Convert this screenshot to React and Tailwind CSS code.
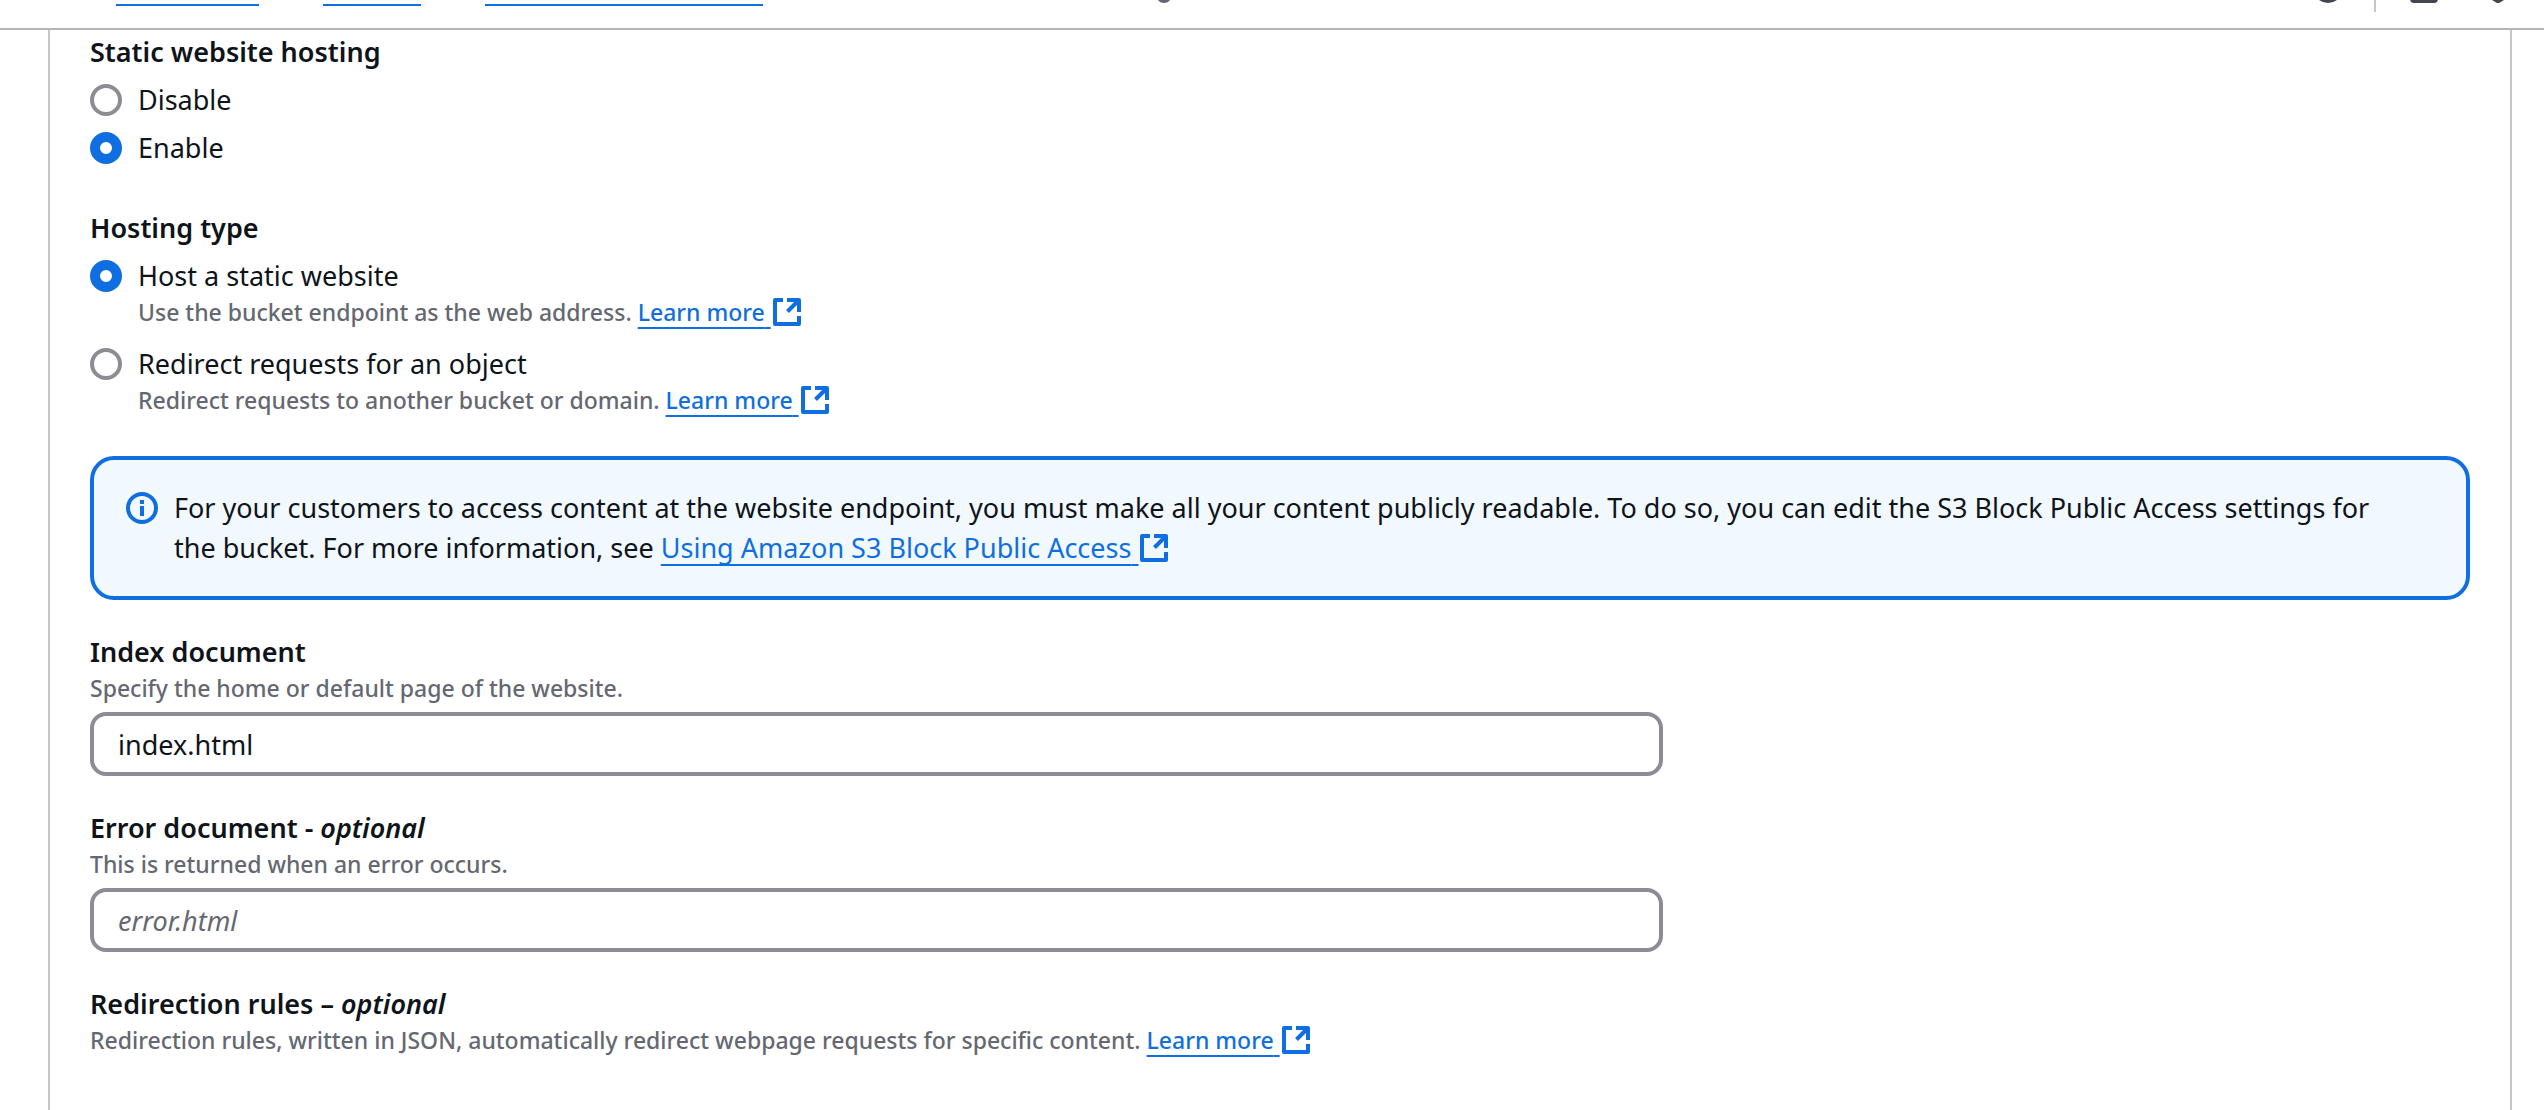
import { useState } from 'react';
import clsx from 'clsx';

function ExternalIcon({ className }) {
  return (
    <svg viewBox="0 0 32 32" className={clsx('inline-block w-8 h-8 align-top', className)} fill="none" stroke="currentColor" strokeWidth="4" strokeLinejoin="round" aria-hidden="true">
      <path d="M12 4H4V28H28V20" />
      <path d="M16 4H28V16" />
      <path d="M28 4L16.5 15.5" />
    </svg>
  );
}

function ExternalLink({ children, iconClassName }) {
  return (
    <a href="#" className="text-[#106fe0]">
      <span className="underline decoration-2 underline-offset-[6px] [text-decoration-skip-ink:none] whitespace-pre-wrap">{children} </span>
      <ExternalIcon className={iconClassName} />
    </a>
  );
}

function RadioOption({ name, value, label, checked, onChange, children }) {
  const id = `${name}-${value}`;
  return (
    <div className="flex gap-4">
      <input
        type="radio"
        id={id}
        name={name}
        value={value}
        checked={checked}
        onChange={() => onChange(value)}
        className="appearance-none shrink-0 w-8 h-8 mt-1 rounded-full border-4 border-[#8c8c94] bg-white checked:border-[10px] checked:border-[#106fe0]"
      />
      <div>
        <label htmlFor={id} className="block text-[27px] leading-10">{label}</label>
        {children && <p className="text-[23px] leading-8 font-medium text-[#656871]">{children}</p>}
      </div>
    </div>
  );
}

function TextField({ id, label, optional, description, ...props }) {
  return (
    <div className="grid grid-cols-3 gap-x-10">
      <div className="col-span-2">
        <label htmlFor={id} className="block text-[27px] leading-10 font-semibold">
          {label}
          {optional && <> - <i>optional</i></>}
        </label>
        <p className="text-[23px] leading-8 font-medium text-[#656871]">{description}</p>
        <input
          id={id}
          type="text"
          className="block w-full h-16 mt-2 px-6 rounded-2xl border-4 border-[#8c8c94] bg-white text-[27px] placeholder:italic placeholder:text-[#656871]"
          {...props}
        />
      </div>
    </div>
  );
}

export default function App() {
  const [hosting, setHosting] = useState('enable');
  const [type, setType] = useState('host');
  const [indexDoc, setIndexDoc] = useState('index.html');

  return (
    <div className="min-h-screen flex flex-col bg-white text-[#0f141a] font-['Noto_Sans',sans-serif]">
      <header className="flex justify-between items-start h-[30px] border-b-2 border-[#b4b4bb]">
        <nav aria-label="Breadcrumbs" className="flex items-start pl-[116px]">
          <a href="#" aria-label="Amazon S3" className="w-[143px] h-[6px] border-b-2 border-[#106fe0]" />
          <a href="#" aria-label="Buckets" className="w-[98px] h-[6px] ml-16 border-b-2 border-[#106fe0]" />
          <a href="#" aria-label="Bucket" className="w-[278px] h-[6px] ml-16 border-b-2 border-[#106fe0]" />
          <svg viewBox="0 0 12 3" className="w-3 h-[3px] ml-[395px]" aria-hidden="true">
            <path d="M0 0H12Q10 3 6 3Q2 3 0 0Z" fill="#656871" />
          </svg>
        </nav>
        <div className="flex items-start pr-10 text-[#424650]">
          <svg viewBox="0 0 18 3" className="w-[18px] h-[3px]" aria-hidden="true">
            <path d="M0 0H18Q14 3 9 3Q4 3 0 0Z" fill="currentColor" />
          </svg>
          <div className="w-[2px] h-3 ml-[37px] bg-[#c6c6cd]" />
          <svg viewBox="0 0 28 3" className="w-7 h-[3px] ml-[34px]" aria-hidden="true">
            <path d="M0 0H28Q27 3 25 3H3Q1 3 0 0Z" fill="currentColor" />
          </svg>
          <svg viewBox="0 0 12 3" className="w-3 h-[3px] ml-[54px]" aria-hidden="true">
            <path d="M0 0H12L8 2.5Q6 3.5 4 2.5Z" fill="currentColor" />
          </svg>
        </div>
      </header>

      <main className="flex-1 flex flex-col gap-8 ml-12 mr-8 px-10 pt-[2px] pb-8 border-x-2 border-[#c6c6cd]">
        <fieldset className="mb-2">
          <legend className="text-[27px] leading-10 font-semibold">Static website hosting</legend>
          <div className="flex flex-col gap-2 mt-2">
            <RadioOption name="hosting" value="disable" label="Disable" checked={hosting === 'disable'} onChange={setHosting} />
            <RadioOption name="hosting" value="enable" label="Enable" checked={hosting === 'enable'} onChange={setHosting} />
          </div>
        </fieldset>

        <fieldset className="mb-2">
          <legend className="text-[27px] leading-10 font-semibold">Hosting type</legend>
          <div className="flex flex-col gap-4 mt-2">
            <RadioOption name="type" value="host" label="Host a static website" checked={type === 'host'} onChange={setType}>
              Use the bucket endpoint as the web address. <ExternalLink>Learn more</ExternalLink>
            </RadioOption>
            <RadioOption name="type" value="redirect" label="Redirect requests for an object" checked={type === 'redirect'} onChange={setType}>
              Redirect requests to another bucket or domain. <ExternalLink>Learn more</ExternalLink>
            </RadioOption>
          </div>
        </fieldset>

        {/* Public access notice */}
        <div className="flex gap-4 px-8 py-7 rounded-3xl border-4 border-[#106fe0] bg-[#f1f9ff]">
          <svg viewBox="0 0 32 32" className="shrink-0 w-8 h-8 mt-1 text-[#106fe0]" fill="none" stroke="currentColor" strokeWidth="4" aria-hidden="true">
            <circle cx="16" cy="16" r="14" />
            <path d="M16 14V24M16 8V12" />
          </svg>
          <p className="pr-14 text-[27px] leading-10">
            For your customers to access content at the website endpoint, you must make all your content publicly readable. To do so, you can edit the S3 Block Public Access settings for the bucket. For more information, see <ExternalLink iconClassName="mt-1">Using Amazon S3 Block Public Access</ExternalLink>
          </p>
        </div>

        <TextField
          id="index-document"
          label="Index document"
          description="Specify the home or default page of the website."
          value={indexDoc}
          onChange={(e) => setIndexDoc(e.target.value)}
        />
        <TextField
          id="error-document"
          label="Error document"
          optional
          description="This is returned when an error occurs."
          placeholder="error.html"
        />

        <section>
          <h3 className="text-[27px] leading-10 font-semibold">Redirection rules – <i>optional</i></h3>
          <p className="text-[23px] leading-8 font-medium text-[#656871]">
            Redirection rules, written in JSON, automatically redirect webpage requests for specific content. <ExternalLink>Learn more</ExternalLink>
          </p>
        </section>
      </main>
    </div>
  );
}
